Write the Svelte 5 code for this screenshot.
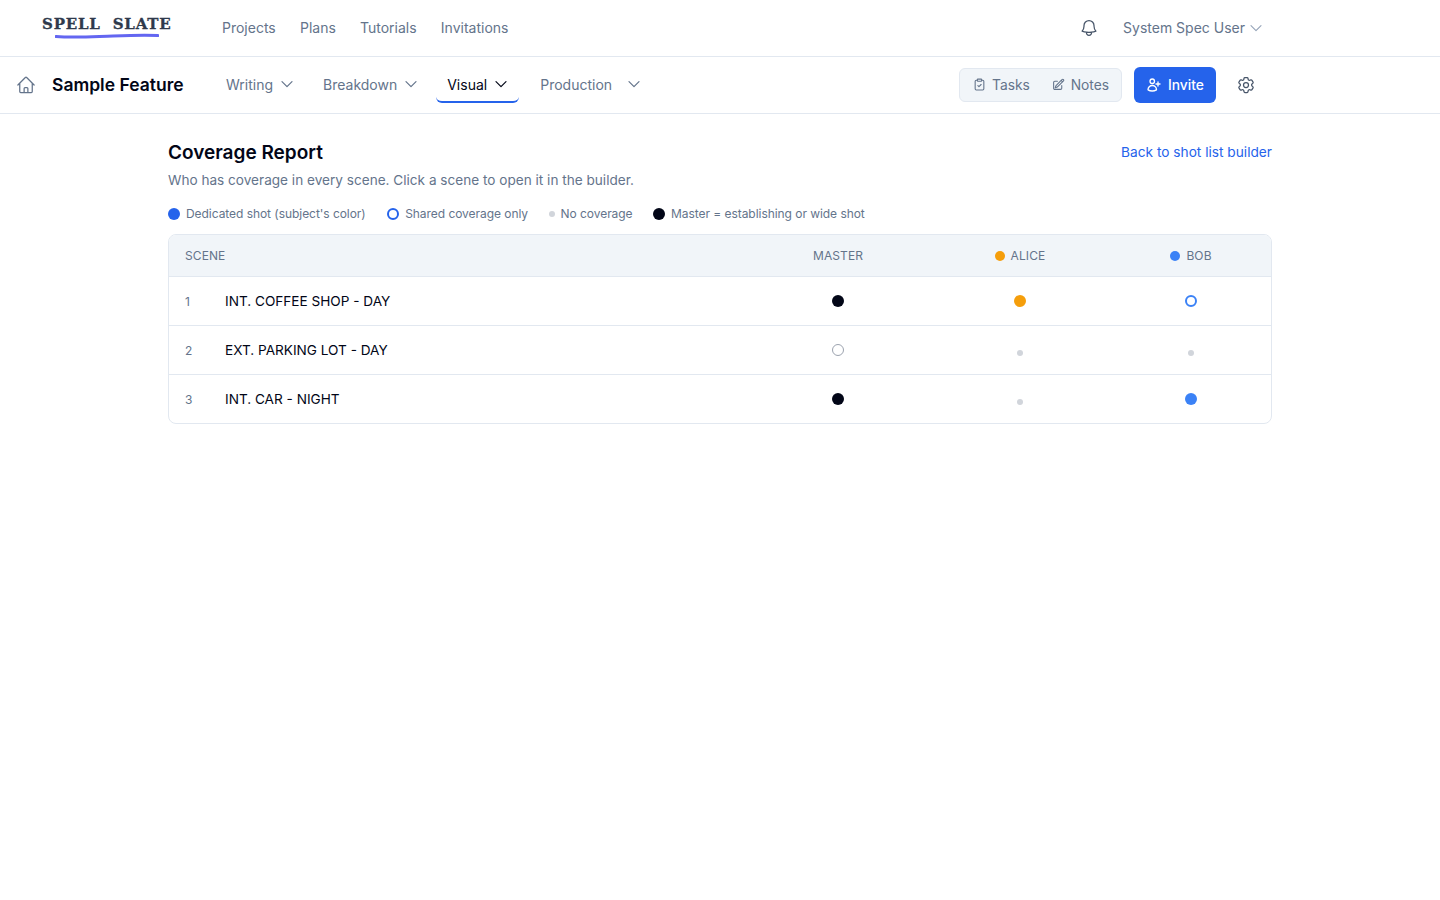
<script>
  const topLinks = ["Projects", "Plans", "Tutorials", "Invitations"];
  const tabs = [
    { label: "Writing" },
    { label: "Breakdown" },
    { label: "Visual", active: true },
    { label: "Production", wide: true },
  ];
  const legend = [
    { kind: "blue", label: "Dedicated shot (subject's color)" },
    { kind: "ring", label: "Shared coverage only" },
    { kind: "tiny", label: "No coverage" },
    { kind: "dark", label: "Master = establishing or wide shot" },
  ];
  const scenes = [
    { n: 1, name: "INT. COFFEE SHOP - DAY", master: "full", alice: "full", bob: "ring" },
    { n: 2, name: "EXT. PARKING LOT - DAY", master: "ring", alice: "none", bob: "none" },
    { n: 3, name: "INT. CAR - NIGHT", master: "full", alice: "none", bob: "full" },
  ];
</script>

{#snippet chevron()}
  <svg class="chev" viewBox="0 0 24 24" fill="none" stroke="currentColor" stroke-width="2" stroke-linecap="round" stroke-linejoin="round"><path d="m4.5 8.5 7.5 7.5 7.5-7.5" /></svg>
{/snippet}

{#snippet mark(state, who)}
  <span class="mark {state} {who}"></span>
{/snippet}

<header class="topbar">
  <div class="logo">
    <span class="logo-text">SPELL&nbsp;&nbsp;SLATE</span>
    <svg class="logo-line" viewBox="0 0 104 6" fill="none"><path d="M1 3.5C20 5 38 3.6 58 3C74 2.4 90 1.8 103 2.6" stroke="#6366f1" stroke-width="3" stroke-linecap="round" /></svg>
  </div>
  <nav class="toplinks">
    {#each topLinks as link}
      <a href="#top">{link}</a>
    {/each}
  </nav>
  <div class="topright">
    <svg class="bell" viewBox="0 0 24 24" fill="none" stroke="currentColor" stroke-width="1.5" stroke-linecap="round" stroke-linejoin="round"><path d="M14.857 17.082a23.848 23.848 0 0 0 5.454-1.31A8.967 8.967 0 0 1 18 9.75V9A6 6 0 0 0 6 9v.75a8.967 8.967 0 0 1-2.312 6.022c1.733.64 3.56 1.085 5.455 1.31m5.714 0a24.255 24.255 0 0 1-5.714 0m5.714 0a3 3 0 1 1-5.714 0" /></svg>
    <button class="user">System Spec User {@render chevron()}</button>
  </div>
</header>

<div class="subbar">
  <svg class="home" viewBox="0 0 24 24" fill="none" stroke="currentColor" stroke-width="1.5" stroke-linecap="round" stroke-linejoin="round"><path d="m2.25 12 8.954-8.955c.44-.439 1.152-.439 1.591 0L21.75 12M4.5 9.75v10.125c0 .621.504 1.125 1.125 1.125H9.75v-4.875c0-.621.504-1.125 1.125-1.125h2.25c.621 0 1.125.504 1.125 1.125V21h4.125c.621 0 1.125-.504 1.125-1.125V9.75M8.25 21h8.25" /></svg>
  <h1>Sample Feature</h1>
  <nav class="tabs">
    {#each tabs as tab}
      <button class="tab" class:active={tab.active} class:wide={tab.wide}>{tab.label} {@render chevron()}</button>
    {/each}
  </nav>
  <div class="actions">
    <div class="group">
      <button>
        <svg viewBox="0 0 24 24" fill="none" stroke="currentColor" stroke-width="2" stroke-linecap="round" stroke-linejoin="round"><rect x="8" y="2" width="8" height="4" rx="1" /><path d="M16 4h2a2 2 0 0 1 2 2v14a2 2 0 0 1-2 2H6a2 2 0 0 1-2-2V6a2 2 0 0 1 2-2h2" /><path d="m9 14 2 2 4-4" /></svg>
        Tasks
      </button>
      <button>
        <svg viewBox="0 0 24 24" fill="none" stroke="currentColor" stroke-width="2" stroke-linecap="round" stroke-linejoin="round"><path d="m16.862 4.487 1.687-1.688a1.875 1.875 0 1 1 2.652 2.652L10.582 16.07a4.5 4.5 0 0 1-1.897 1.13L6 18l.8-2.685a4.5 4.5 0 0 1 1.13-1.897l8.932-8.931Zm0 0L19.5 7.125M18 14v4.75A2.25 2.25 0 0 1 15.75 21H5.25A2.25 2.25 0 0 1 3 18.75V8.25A2.25 2.25 0 0 1 5.25 6H10" /></svg>
        Notes
      </button>
    </div>
    <button class="invite">
      <svg viewBox="0 0 24 24" fill="none" stroke="currentColor" stroke-width="2" stroke-linecap="round" stroke-linejoin="round"><path d="M18 7.5v3m0 0v3m0-3h3m-3 0h-3m-2.25-4.125a3.375 3.375 0 1 1-6.75 0 3.375 3.375 0 0 1 6.75 0ZM3 19.235v-.11a6.375 6.375 0 0 1 12.75 0v.109A12.318 12.318 0 0 1 9.374 21c-2.331 0-4.512-.645-6.374-1.766Z" /></svg>
      Invite
    </button>
    <svg class="gear" viewBox="0 0 24 24" fill="none" stroke="currentColor" stroke-width="1.5" stroke-linecap="round" stroke-linejoin="round"><path d="M9.594 3.94c.09-.542.56-.94 1.11-.94h2.593c.55 0 1.02.398 1.11.94l.213 1.281c.063.374.313.686.645.87.074.04.147.083.22.127.325.196.72.257 1.075.124l1.217-.456a1.125 1.125 0 0 1 1.37.49l1.296 2.247a1.125 1.125 0 0 1-.26 1.431l-1.003.827c-.293.241-.438.613-.43.992a7.723 7.723 0 0 1 0 .255c-.008.378.137.75.43.991l1.004.827c.424.35.534.955.26 1.43l-1.298 2.247a1.125 1.125 0 0 1-1.369.491l-1.217-.456c-.355-.133-.75-.072-1.076.124a6.47 6.47 0 0 1-.22.128c-.331.183-.581.495-.644.869l-.213 1.281c-.09.543-.56.94-1.11.94h-2.594c-.55 0-1.019-.398-1.11-.94l-.213-1.281c-.062-.374-.312-.686-.644-.87a6.52 6.52 0 0 1-.22-.127c-.325-.196-.72-.257-1.076-.124l-1.217.456a1.125 1.125 0 0 1-1.369-.49l-1.297-2.247a1.125 1.125 0 0 1 .26-1.431l1.004-.827c.292-.24.437-.613.43-.991a6.932 6.932 0 0 1 0-.255c.007-.38-.138-.751-.43-.992l-1.004-.827a1.125 1.125 0 0 1-.26-1.43l1.297-2.247a1.125 1.125 0 0 1 1.37-.491l1.216.456c.356.133.751.072 1.076-.124.072-.044.146-.086.22-.128.332-.183.582-.495.644-.869l.214-1.28Z" /><path d="M15 12a3 3 0 1 1-6 0 3 3 0 0 1 6 0Z" /></svg>
  </div>
</div>

<main>
  <div class="heading">
    <h2>Coverage Report</h2>
    <a href="#top">Back to shot list builder</a>
  </div>
  <p class="sub">Who has coverage in every scene. Click a scene to open it in the builder.</p>

  <div class="legend">
    {#each legend as item}
      <div class="legend-item">
        <span class="swatch {item.kind}"></span>
        {item.label}
      </div>
    {/each}
  </div>

  <div class="report">
    <div class="row head">
      <div class="scene-col">Scene</div>
      <div class="cell">Master</div>
      <div class="cell who"><span class="dot alice"></span>Alice</div>
      <div class="cell who"><span class="dot bob"></span>Bob</div>
    </div>
    {#each scenes as scene}
      <div class="row">
        <div class="scene-col body-scene">
          <span class="num">{scene.n}</span>
          <span class="name">{scene.name}</span>
        </div>
        <div class="cell">{@render mark(scene.master, "master")}</div>
        <div class="cell">{@render mark(scene.alice, "alice")}</div>
        <div class="cell">{@render mark(scene.bob, "bob")}</div>
      </div>
    {/each}
  </div>
</main>

<style>
  :global(body) {
    margin: 0;
    background: #fff;
    font-family: Inter, "Liberation Sans", sans-serif;
    color: #020617;
  }

  button {
    font: inherit;
    background: none;
    border: none;
    padding: 0;
    color: inherit;
  }

  a {
    text-decoration: none;
  }

  .topbar {
    display: flex;
    align-items: center;
    height: 56px;
    border-bottom: 1px solid #e2e8f0;
    padding: 0 176px 0 42px;
  }

  .logo {
    width: 180px;
    display: flex;
    flex-direction: column;
    margin-top: -3px;
  }

  .logo-text {
    font-family: "DejaVu Serif", serif;
    font-weight: 700;
    font-size: 15px;
    line-height: 18px;
    color: #2f3a4c;
    letter-spacing: 0.8px;
    white-space: nowrap;
    -webkit-text-stroke: 0.3px #2f3a4c;
  }

  .logo-line {
    display: block;
    width: 104px;
    height: 6px;
    margin: 0 0 0 13px;
  }

  .toplinks {
    display: flex;
    gap: 24.2px;
    font-size: 14px;
    padding-bottom: 2px;
  }

  .toplinks a {
    color: #64748b;
  }

  .topright {
    margin-left: auto;
    display: flex;
    align-items: center;
    gap: 24px;
    color: #64748b;
    font-size: 14px;
  }

  .bell {
    width: 20px;
    height: 20px;
    color: #475569;
  }

  .user {
    display: flex;
    align-items: center;
    gap: 3px;
    padding-bottom: 1px;
  }

  .user .chev {
    color: #94a3b8;
    stroke-width: 1.6;
  }

  .chev {
    width: 16px;
    height: 16px;
    stroke-width: 1.8;
  }

  .subbar {
    display: flex;
    align-items: center;
    height: 56px;
    border-bottom: 1px solid #e2e8f0;
    padding: 0 184px 0 16px;
  }

  .home {
    width: 20px;
    height: 20px;
    color: #64748b;
    margin-right: 16px;
  }

  h1 {
    margin: 0 32px 0 0;
    font-size: 17.5px;
    font-weight: 600;
    line-height: 28px;
    width: 131px;
    white-space: nowrap;
  }

  .tabs {
    display: flex;
    gap: 7px;
  }

  .tab {
    display: flex;
    align-items: center;
    justify-content: space-between;
    gap: 6px;
    height: 36px;
    padding: 0 10px 0 11px;
    font-size: 14px;
    color: #64748b;
    border-bottom: 2px solid transparent;
    border-radius: 6px;
    box-sizing: border-box;
  }

  .tab.active {
    color: #020617;
    border-bottom-color: #2563eb;
  }

  .tab.wide {
    gap: 14px;
    margin-left: 3px;
  }

  .actions {
    margin-left: auto;
    display: flex;
    align-items: center;
  }

  .group {
    display: flex;
    align-items: center;
    height: 34px;
    box-sizing: border-box;
    width: 163px;
    padding: 0 12px 0 13px;
    justify-content: space-between;
    background: #f1f5f9;
    border: 1px solid #e2e8f0;
    border-radius: 6px;
  }

  .group button {
    display: flex;
    align-items: center;
    gap: 6px;
    font-size: 13.8px;
    color: #64748b;
    padding-bottom: 1px;
  }

  .group svg {
    width: 13px;
    height: 13px;
  }

  .invite {
    display: flex;
    align-items: center;
    gap: 6px;
    height: 36px;
    margin-left: 12px;
    padding: 0 12px;
    background: #2563eb;
    color: #fff;
    border-radius: 6px;
    font-size: 13.8px;
    font-weight: 500;
    box-sizing: border-box;
    width: 82px;
  }

  .invite svg {
    width: 16px;
    height: 16px;
  }

  .gear {
    width: 20px;
    height: 20px;
    margin-left: 20px;
    color: #475569;
  }

  main {
    width: 1104px;
    margin: 0 auto;
    padding-top: 24px;
  }

  .heading {
    display: flex;
    justify-content: space-between;
    align-items: center;
    height: 28px;
  }

  h2 {
    margin: 2px 0 0;
    font-size: 19px;
    font-weight: 600;
    line-height: 28px;
  }

  .heading a {
    color: #2563eb;
    font-size: 13.7px;
    padding-bottom: 1px;
  }

  .sub {
    margin: 4px 0 0;
    font-size: 13.6px;
    line-height: 20px;
    color: #64748b;
  }

  .legend {
    display: flex;
    gap: 20.5px;
    margin-top: 16px;
    height: 16px;
    font-size: 12px;
    letter-spacing: -0.05px;
    line-height: 16px;
    color: #64748b;
  }

  .legend-item {
    display: flex;
    align-items: center;
    gap: 6px;
  }

  .legend-item:first-child {
    margin-right: 1px;
  }

  .swatch {
    width: 12px;
    height: 12px;
    border-radius: 50%;
    box-sizing: border-box;
  }

  .swatch.blue {
    background: #2563eb;
  }

  .swatch.ring {
    border: 2px solid #2563eb;
  }

  .swatch.tiny {
    width: 6px;
    height: 6px;
    background: #d1d5db;
  }

  .swatch.dark {
    background: #020617;
  }

  .report {
    margin-top: 12px;
    border: 1px solid #e2e8f0;
    border-radius: 8px;
    overflow: hidden;
  }

  .row {
    display: grid;
    grid-template-columns: 1fr 182px 182px 160px;
    align-items: center;
    height: 49px;
    box-sizing: border-box;
    border-top: 1px solid #e2e8f0;
  }

  .row.head {
    height: 41px;
    border-top: none;
    background: #f1f5f9;
    font-size: 12px;
    letter-spacing: 0.1px;
    text-transform: uppercase;
    color: #64748b;
  }

  .scene-col {
    padding-left: 16px;
  }

  .body-scene {
    display: flex;
    align-items: center;
    font-size: 13.6px;
  }

  .num {
    width: 40px;
    font-size: 12px;
    color: #64748b;
  }

  .cell {
    display: flex;
    justify-content: center;
    align-items: center;
  }

  .cell.who {
    gap: 6px;
  }

  .dot {
    width: 10px;
    height: 10px;
    border-radius: 50%;
  }

  .dot.alice {
    background: #f59e0b;
  }

  .dot.bob {
    background: #3b82f6;
  }

  .mark {
    width: 12px;
    height: 12px;
    border-radius: 50%;
    box-sizing: border-box;
  }

  .mark.none {
    width: 6px;
    height: 6px;
    margin-top: 6px;
    background: #d1d5db;
  }

  .mark.full.master {
    background: #020617;
  }

  .mark.full.alice {
    background: #f59e0b;
  }

  .mark.full.bob {
    background: #3b82f6;
  }

  .mark.ring.bob {
    border: 2px solid #3b82f6;
  }

  .mark.ring.master {
    border: 1px solid #9ca3af;
  }
</style>
